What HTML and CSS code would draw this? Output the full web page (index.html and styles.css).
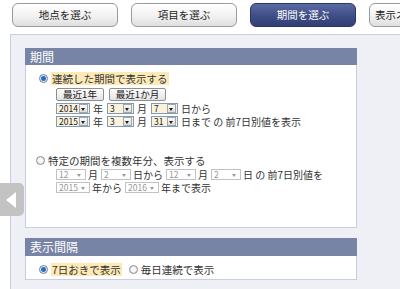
FILE: index.html
```html
<!DOCTYPE html>
<html lang="ja">
<head>
<meta charset="utf-8">
<link rel="stylesheet" href="styles.css">
</head>
<body>
<div class="tabs">
  <div class="tab">地点を選ぶ</div>
  <div class="tab">項目を選ぶ</div>
  <div class="tab active">期間を選ぶ</div>
  <div class="tab">表示オプション</div>
</div>
<div class="panel">
  <div class="section">
    <div class="head">期間</div>
    <div class="body body-period">
      <div class="opt"><span class="radio on"></span><span class="hl">連続した期間で表示する</span></div>
      <div class="row btns"><span class="btn w1">最近1年</span><span class="btn w2">最近1か月</span></div>
      <div class="row">
        <span class="sel s-year"><span class="v">2014</span><span class="arr"></span></span><span class="t">年</span>
        <span class="sel s-sm"><span class="v">3</span><span class="arr"></span></span><span class="t">月</span>
        <span class="sel s-sm"><span class="v">7</span><span class="arr"></span></span><span class="t">日から</span>
      </div>
      <div class="row">
        <span class="sel s-year"><span class="v">2015</span><span class="arr"></span></span><span class="t">年</span>
        <span class="sel s-sm"><span class="v">3</span><span class="arr"></span></span><span class="t">月</span>
        <span class="sel s-sm"><span class="v">31</span><span class="arr"></span></span><span class="t">日まで の 前7日別値を表示</span>
      </div>
      <div class="opt opt2"><span class="radio"></span><span>特定の期間を複数年分、表示する</span></div>
      <div class="row tight">
        <span class="sel dis s-md"><span class="v">12</span><span class="arr"></span></span><span class="t">月</span>
        <span class="sel dis s-md"><span class="v">2</span><span class="arr"></span></span><span class="t">日から</span>
        <span class="sel dis s-md"><span class="v">12</span><span class="arr"></span></span><span class="t">月</span>
        <span class="sel dis s-md"><span class="v">2</span><span class="arr"></span></span><span class="t">日 の 前7日別値を</span>
      </div>
      <div class="row tight">
        <span class="sel dis s-year"><span class="v">2015</span><span class="arr"></span></span><span class="t">年から</span>
        <span class="sel dis s-year"><span class="v">2016</span><span class="arr"></span></span><span class="t">年まで表示</span>
      </div>
    </div>
  </div>
  <div class="section sec2">
    <div class="head">表示間隔</div>
    <div class="body body-int">
      <div class="opt"><span class="radio on"></span><span class="hl">7日おきで表示</span><span class="radio r2"></span><span>毎日連続で表示</span></div>
    </div>
  </div>
</div>
<div class="back"><span class="tri"></span></div>
</body>
</html>
```

FILE: styles.css
```css
html, body {
  margin: 0;
  padding: 0;
  overflow: hidden;
  width: 400px;
  height: 289px;
  background: #fff;
  font-family: "Noto Sans CJK JP", "Noto Sans", sans-serif;
  color: #333;
  position: relative;
}
.tabs {
  display: flex;
  gap: 13px;
  padding: 3px 0 0 12px;
  white-space: nowrap;
}
.tab {
  flex: none;
  width: 104px;
  height: 22px;
  border: 1px solid #9a9a9a;
  border-radius: 6px;
  background: linear-gradient(#ffffff, #f0f0f0 60%, #dedede);
  font-size: 10.5px;
  line-height: 22px;
  text-align: center;
  color: #222;
  overflow: hidden;
}
.tab:last-child {
  text-align: left;
  padding-left: 5px;
}
.tab.active {
  background: linear-gradient(#5b6aa2, #3f4d86 55%, #323e74);
  border-color: #2c3568;
  color: #fff;
}
.panel {
  margin: 7px 0 0 10px;
  width: 420px;
  height: 260px;
  border-top: 1px solid #c9cde0;
  border-left: 1px solid #c9cde0;
  background: #eef0f6;
  padding: 13px 0 0 14px;
  box-sizing: border-box;
}
.section {
  width: 332px;
}
.head {
  height: 17px;
  background: #7784a5;
  color: #fff;
  font-size: 12px;
  line-height: 17px;
  padding-left: 5px;
}
.body {
  background: #fff;
  border: 1px solid #c9cde0;
  border-top: none;
  box-sizing: border-box;
  padding-left: 13px;
  font-size: 10.5px;
}
.body-period {
  height: 163px;
  padding-top: 7px;
}
.sec2 {
  margin-top: 10px;
}
.sec2 .head {
  height: 18px;
  line-height: 18px;
}
.body-int {
  height: 24px;
  padding-top: 7px;
}
.opt {
  display: flex;
  align-items: center;
  height: 13px;
  line-height: 13px;
  white-space: nowrap;
}
.opt2 {
  margin-top: 27px;
  margin-left: -3px;
}
.radio {
  width: 7px;
  height: 7px;
  border: 1px solid #8a8a8a;
  border-radius: 50%;
  background: radial-gradient(#fff, #e4e4e4);
  margin-right: 3px;
  flex: none;
}
.radio.on {
  border-color: #6f7f99;
  background: radial-gradient(circle, #1e6fd0 0, #2a6cc0 2px, #e8eef6 3px);
}
.r2 {
  margin-left: 7px;
}
.hl {
  background: #fde9b6;
  padding: 0 1px;
}
.row {
  display: flex;
  align-items: center;
  height: 11px;
  line-height: 11px;
  margin-left: 17px;
  margin-top: 2px;
  white-space: nowrap;
}
.row.tight .t {
  margin: 0 3px 0 2px;
}
.btns {
  height: 13px;
  line-height: 13px;
  gap: 5px;
  margin-top: 3px;
  margin-bottom: 2px;
}
.btn {
  height: 11px;
  border: 1px solid #8f8f8f;
  border-radius: 2px;
  background: linear-gradient(#fdfdfd, #e3e3e3);
  font-size: 9.5px;
  line-height: 11px;
  text-align: center;
  color: #222;
}
.w1 { width: 46px; }
.w2 { width: 55px; }
.sel {
  display: inline-flex;
  align-items: center;
  height: 9px;
  border: 1px solid #7f9db9;
  background: #fbf2dc;
  font-size: 8.5px;
  line-height: 9px;
  box-sizing: content-box;
  flex: none;
}
.sel .v {
  flex: 1;
  padding-left: 2px;
  color: #222;
}
.sel .arr {
  width: 7px;
  height: 7px;
  margin-right: 1px;
  border: 1px solid #a5a5a5;
  background: linear-gradient(#fafafa, #dcdcdc);
  position: relative;
  box-sizing: content-box;
}
.sel .arr::after {
  content: "";
  position: absolute;
  left: 1px;
  top: 3px;
  border-left: 2.5px solid transparent;
  border-right: 2.5px solid transparent;
  border-top: 3px solid #222;
}
.s-year { width: 32px; }
.s-sm { width: 25px; }
.s-md { width: 28px; }
.sel.dis {
  border-color: #c2c2c2;
  background: #fff;
}
.sel.dis .v {
  color: #999;
}
.sel.dis .arr {
  border: none;
  background: none;
}
.sel.dis .arr::after {
  border-top-color: #999;
  left: 0;
}
.t {
  margin: 0 4px 0 3px;
  font-size: 10px;
  line-height: 11px;
}
.back {
  position: absolute;
  left: -6px;
  top: 183px;
  width: 30px;
  height: 33px;
  background: #c3c3c3;
  border-radius: 5px;
  display: flex;
  align-items: center;
  justify-content: center;
}
.tri {
  margin-left: 4px;
  border-top: 8px solid transparent;
  border-bottom: 8px solid transparent;
  border-right: 10px solid #fff;
}
```
